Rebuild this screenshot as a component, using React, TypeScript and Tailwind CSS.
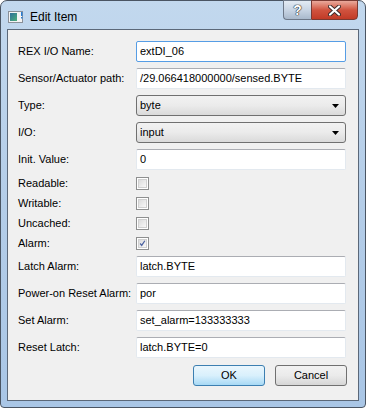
import React from "react";

const font = { fontFamily: '"Liberation Sans", Arial, sans-serif' };

function TextInput({ value, focused }: { value: string; focused?: boolean }) {
  return (
    <div
      className={`w-[210px] h-[21px] rounded-[2px] bg-white flex items-center px-[3px] text-[11px] text-black border ${
        focused
          ? "border-[#569de5]"
          : "border-[#e3e9ef] border-t-[#abadb3]"
      }`}
    >
      {value}
    </div>
  );
}

function Combo({ value }: { value: string }) {
  return (
    <div className="w-[210px] h-[21px] rounded-[3px] border border-[#707070] bg-gradient-to-b from-[#f2f2f2] via-[#ebebeb] to-[#dadada] flex items-center justify-between pl-[3px] pr-[6px] text-[11px] text-black">
      <span>{value}</span>
      <svg width="7" height="4" viewBox="0 0 7 4">
        <path d="M0 0 H7 L3.5 4 Z" fill="#000" />
      </svg>
    </div>
  );
}

function Check({ checked }: { checked?: boolean }) {
  return (
    <div className="w-[13px] h-[13px] border border-[#8e8f8f] bg-white p-[1px]">
      <div className="w-full h-full border border-[#d0d0d0] bg-gradient-to-br from-[#dcdcdc] to-[#f8f8f8] flex items-center justify-center">
        {checked && (
          <svg width="9" height="9" viewBox="0 0 9 9">
            <path d="M1.5 4.5 L3.5 7 L7.5 1" stroke="#4b62a0" strokeWidth="1.6" fill="none" />
          </svg>
        )}
      </div>
    </div>
  );
}

function Row({ label, children, h = "h-[21px]" }: { label: string; children: React.ReactNode; h?: string }) {
  return (
    <div className={`flex items-center ${h}`}>
      <div className="w-[118px] text-[11px] text-black whitespace-nowrap">{label}</div>
      {children}
    </div>
  );
}

function TitleIcon() {
  return (
    <svg width="16" height="14" viewBox="0 0 16 14">
      <defs>
        <linearGradient id="ti" x1="0" y1="0" x2="1" y2="1">
          <stop offset="0" stopColor="#2f6f9a" />
          <stop offset="1" stopColor="#4caf7a" />
        </linearGradient>
      </defs>
      <rect x="0.5" y="1.5" width="14" height="11" fill="#f4f4f4" stroke="#8a9099" />
      <rect x="2" y="3" width="7" height="8" fill="url(#ti)" />
      <rect x="13" y="2" width="1.5" height="4" fill="#2a7fd4" />
      <rect x="13" y="7" width="1.5" height="1.5" fill="#2a7fd4" />
    </svg>
  );
}

export default function App() {
  return (
    <div style={font} className="w-[366px] h-[408px] overflow-hidden bg-white">
      <div className="w-[366px] h-[408px] rounded-t-[7px] rounded-b-[4px] border border-[#4a5563] bg-gradient-to-b from-[#c2d8ee] via-[#b4cde8] to-[#a9c6e6] flex flex-col">
        <div className="h-[28px] flex items-start relative">
          <div className="flex items-center gap-[6px] pl-[7px] pt-[7px]">
            <TitleIcon />
            <span className="text-[12px] text-black">Edit Item</span>
          </div>
          <div className="absolute right-[7px] top-[-1px] flex">
            <div className="w-[28px] h-[20px] rounded-bl-[4px] border border-[#6d7888] border-r-0 bg-gradient-to-b from-[#e3ebf4] via-[#c8d5e4] to-[#a9b9cc] flex items-center justify-center">
              <span className="text-[14px] font-bold text-white leading-none" style={{ textShadow: "0 0 1px #222, 0 0 1px #222, 0 0 1px #222" }}>?</span>
            </div>
            <div className="w-[47px] h-[20px] rounded-br-[4px] border border-[#7a3a33] bg-gradient-to-b from-[#e9a99c] via-[#d0533f] to-[#c23a26] flex items-center justify-center">
              <svg width="13" height="11" viewBox="0 0 13 11">
                <path d="M2 1.5 L11 9.5 M11 1.5 L2 9.5" stroke="#3a2a2a" strokeWidth="4" strokeLinecap="round" />
                <path d="M2 1.5 L11 9.5 M11 1.5 L2 9.5" stroke="#fff" strokeWidth="2.2" strokeLinecap="round" />
              </svg>
            </div>
          </div>
        </div>
        <div className="mx-[6px] h-[372px] border border-[#5b6879] bg-[#f0f0f0] pl-[10px] pt-[11px] flex flex-col gap-[6px]">
          <Row label="REX I/O Name:"><TextInput value="extDI_06" focused /></Row>
          <Row label="Sensor/Actuator path:"><TextInput value="/29.066418000000/sensed.BYTE" /></Row>
          <Row label="Type:"><Combo value="byte" /></Row>
          <Row label="I/O:"><Combo value="input" /></Row>
          <Row label="Init. Value:"><TextInput value="0" /></Row>
          <Row label="Readable:" h="h-[14px]"><Check /></Row>
          <Row label="Writable:" h="h-[14px]"><Check /></Row>
          <Row label="Uncached:" h="h-[14px]"><Check /></Row>
          <Row label="Alarm:" h="h-[14px]"><Check checked /></Row>
          <Row label="Latch Alarm:"><TextInput value="latch.BYTE" /></Row>
          <Row label="Power-on Reset Alarm:"><TextInput value="por" /></Row>
          <Row label="Set Alarm:"><TextInput value="set_alarm=133333333" /></Row>
          <Row label="Reset Latch:"><TextInput value="latch.BYTE=0" /></Row>
          <div className="flex justify-end gap-[10px] pr-[11px] pt-[1px]">
            <div className="w-[72px] h-[21px] rounded-[3px] border border-[#3c7fb1] bg-gradient-to-b from-[#eaf6fd] via-[#d9f0fc] to-[#a7d9f5] flex items-center justify-center text-[11px] text-black">
              OK
            </div>
            <div className="w-[72px] h-[21px] rounded-[3px] border border-[#707070] bg-gradient-to-b from-[#f2f2f2] via-[#ebebeb] to-[#d6d6d6] flex items-center justify-center text-[11px] text-black">
              Cancel
            </div>
          </div>
        </div>
      </div>
    </div>
  );
}
